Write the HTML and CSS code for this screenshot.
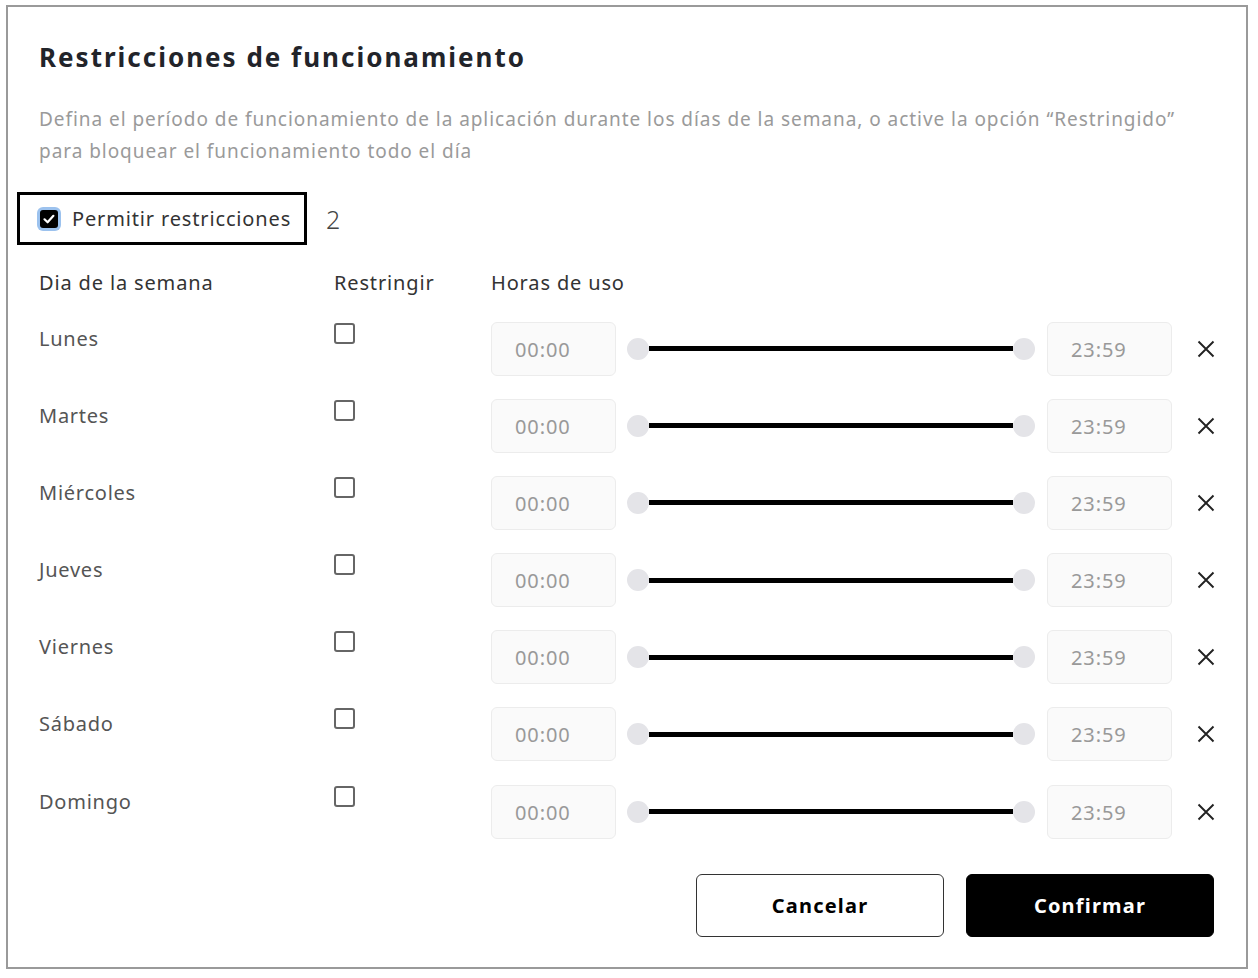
FILE: index.html
```html
<!DOCTYPE html>
<html lang="es">
<head>
<meta charset="utf-8">
<title>Restricciones de funcionamiento</title>
<link rel="stylesheet" href="styles.css">
</head>
<body>
<div class="frame">
  <h1 class="title">Restricciones de funcionamiento</h1>
  <p class="desc">Defina el período de funcionamiento de la aplicación durante los días de la semana, o active la opción “Restringido” para bloquear el funcionamiento todo el día</p>

  <div class="permit-row">
    <label class="permit">
      <span class="cb-checked">
        <svg viewBox="0 0 18 18" width="18" height="18"><path d="M4.5 9.3 L7.6 12.3 L13.4 5.8" fill="none" stroke="#fff" stroke-width="2.2" stroke-linecap="round" stroke-linejoin="round"/></svg>
      </span>
      <span class="permit-text">Permitir restricciones</span>
    </label>
    <span class="count">2</span>
  </div>

  <div class="grid head">
    <div class="h">Dia de la semana</div>
    <div class="h">Restringir</div>
    <div class="h">Horas de uso</div>
  </div>

  <div class="rows">
    <div class="grid row">
      <div class="day">Lunes</div>
      <div><span class="cb"></span></div>
      <div class="hours">
        <div class="time">00:00</div>
        <div class="slider"><span class="knob"></span><span class="track"></span><span class="knob"></span></div>
        <div class="time">23:59</div>
        <svg class="x" viewBox="0 0 18 18" width="18" height="18"><path d="M1.5 1.5 L16.5 16.5 M16.5 1.5 L1.5 16.5" stroke="#222" stroke-width="1.9"/></svg>
      </div>
    </div>
    <div class="grid row">
      <div class="day">Martes</div>
      <div><span class="cb"></span></div>
      <div class="hours">
        <div class="time">00:00</div>
        <div class="slider"><span class="knob"></span><span class="track"></span><span class="knob"></span></div>
        <div class="time">23:59</div>
        <svg class="x" viewBox="0 0 18 18" width="18" height="18"><path d="M1.5 1.5 L16.5 16.5 M16.5 1.5 L1.5 16.5" stroke="#222" stroke-width="1.9"/></svg>
      </div>
    </div>
    <div class="grid row">
      <div class="day">Miércoles</div>
      <div><span class="cb"></span></div>
      <div class="hours">
        <div class="time">00:00</div>
        <div class="slider"><span class="knob"></span><span class="track"></span><span class="knob"></span></div>
        <div class="time">23:59</div>
        <svg class="x" viewBox="0 0 18 18" width="18" height="18"><path d="M1.5 1.5 L16.5 16.5 M16.5 1.5 L1.5 16.5" stroke="#222" stroke-width="1.9"/></svg>
      </div>
    </div>
    <div class="grid row">
      <div class="day">Jueves</div>
      <div><span class="cb"></span></div>
      <div class="hours">
        <div class="time">00:00</div>
        <div class="slider"><span class="knob"></span><span class="track"></span><span class="knob"></span></div>
        <div class="time">23:59</div>
        <svg class="x" viewBox="0 0 18 18" width="18" height="18"><path d="M1.5 1.5 L16.5 16.5 M16.5 1.5 L1.5 16.5" stroke="#222" stroke-width="1.9"/></svg>
      </div>
    </div>
    <div class="grid row">
      <div class="day">Viernes</div>
      <div><span class="cb"></span></div>
      <div class="hours">
        <div class="time">00:00</div>
        <div class="slider"><span class="knob"></span><span class="track"></span><span class="knob"></span></div>
        <div class="time">23:59</div>
        <svg class="x" viewBox="0 0 18 18" width="18" height="18"><path d="M1.5 1.5 L16.5 16.5 M16.5 1.5 L1.5 16.5" stroke="#222" stroke-width="1.9"/></svg>
      </div>
    </div>
    <div class="grid row">
      <div class="day">Sábado</div>
      <div><span class="cb"></span></div>
      <div class="hours">
        <div class="time">00:00</div>
        <div class="slider"><span class="knob"></span><span class="track"></span><span class="knob"></span></div>
        <div class="time">23:59</div>
        <svg class="x" viewBox="0 0 18 18" width="18" height="18"><path d="M1.5 1.5 L16.5 16.5 M16.5 1.5 L1.5 16.5" stroke="#222" stroke-width="1.9"/></svg>
      </div>
    </div>
    <div class="grid row">
      <div class="day">Domingo</div>
      <div><span class="cb"></span></div>
      <div class="hours">
        <div class="time">00:00</div>
        <div class="slider"><span class="knob"></span><span class="track"></span><span class="knob"></span></div>
        <div class="time">23:59</div>
        <svg class="x" viewBox="0 0 18 18" width="18" height="18"><path d="M1.5 1.5 L16.5 16.5 M16.5 1.5 L1.5 16.5" stroke="#222" stroke-width="1.9"/></svg>
      </div>
    </div>
  </div>

  <div class="actions">
    <button class="btn btn-cancel">Cancelar</button>
    <button class="btn btn-confirm">Confirmar</button>
  </div>
</div>
</body>
</html>
```
FILE: styles.css
```css
* { box-sizing: border-box; }
html, body { margin: 0; padding: 0; background: #fff; }
body {
  font-family: "Noto Sans", "Open Sans", sans-serif;
  color: #333;
}
.frame {
  margin: 5px 0 0 6px;
  width: 1242px;
  height: 964px;
  border: 2px solid #9a9a9a;
  padding: 32px 32px 0 31px;
}
.title {
  margin: 0;
  font-size: 26px;
  line-height: 36px;
  font-weight: 700;
  letter-spacing: 2px;
  color: #22242a;
}
.desc {
  margin: 28px 0 0;
  font-size: 19px;
  line-height: 32px;
  letter-spacing: 0.95px;
  color: #9a9a9a;
}
.permit-row {
  margin: 25px 0 0 -22px;
  display: flex;
  align-items: center;
  gap: 19px;
}
.permit {
  display: flex;
  align-items: center;
  gap: 14px;
  width: 290px;
  height: 53px;
  border: 3px solid #000;
  padding-left: 20px;
}
.cb-checked {
  width: 18px;
  height: 18px;
  border-radius: 3px;
  background: #000;
  box-shadow: 0 0 0 3px #9cc2ee;
  display: flex;
  flex: none;
}
.permit-text {
  font-size: 20px;
  letter-spacing: 0.85px;
  color: #333;
  white-space: nowrap;
}
.count {
  font-size: 25px;
  color: #444;
  font-weight: 300;
}
.grid {
  display: grid;
  grid-template-columns: 295px 157px 1fr;
}
.head {
  margin-top: 25px;
}
.h {
  font-size: 20px;
  line-height: 26px;
  letter-spacing: 0.85px;
  color: #333;
}
.rows {
  margin-top: 25.5px;
  display: flex;
  flex-direction: column;
  gap: 23.2px;
}
.row {
  align-items: start;
}
.day {
  font-size: 20px;
  line-height: 28px;
  padding-top: 3px;
  letter-spacing: 0.75px;
  color: #555;
}
.cb {
  display: block;
  margin-top: 1px;
  width: 21px;
  height: 21px;
  border: 2px solid #666;
  border-radius: 3px;
}
.hours {
  display: flex;
  align-items: center;
}
.time {
  width: 125px;
  height: 54px;
  background: #fafafa;
  border: 1px solid #ececec;
  border-radius: 6px;
  padding: 14px 0 0 23px;
  font-size: 20px;
  line-height: 26px;
  letter-spacing: 0.9px;
  color: #999;
}
.slider {
  width: 408px;
  margin: 0 12px 0 11px;
  display: flex;
  align-items: center;
}
.knob {
  width: 22px;
  height: 22px;
  border-radius: 50%;
  background: #e4e4e8;
  flex: none;
}
.track {
  flex: 1;
  height: 5px;
  background: #000;
}
.x {
  margin-left: 25px;
}
.actions {
  margin-top: 35px;
  display: flex;
  justify-content: flex-end;
  gap: 22px;
}
.btn {
  width: 248px;
  height: 63px;
  border-radius: 6px;
  font-family: "Noto Sans", sans-serif;
  font-size: 20px;
  font-weight: 700;
  letter-spacing: 1.2px;
  cursor: pointer;
}
.btn-cancel {
  background: #fff;
  border: 1px solid #333;
  color: #000;
}
.btn-confirm {
  background: #000;
  border: 1px solid #000;
  color: #fff;
}
```
